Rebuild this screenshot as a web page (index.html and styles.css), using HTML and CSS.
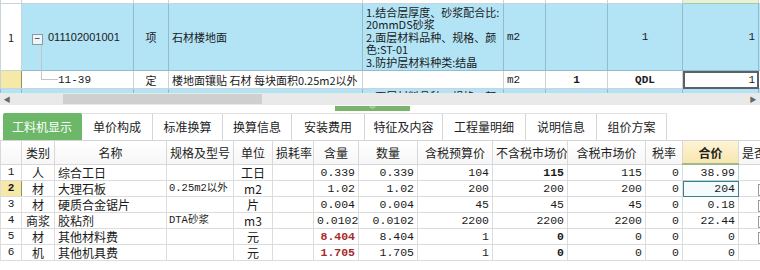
FILE: index.html
```html
<!DOCTYPE html>
<html lang="zh-CN">
<head>
    <meta charset="UTF-8">
    <title>工料机显示</title>
    <link rel="stylesheet" href="styles.css">
</head>
<body>
    <div class="top-pane">
        <div class="top-view">
            <table class="grid grid-top">
                <colgroup>
                    <col style="width:21px"><col style="width:112px"><col style="width:35px"><col style="width:194px">
                    <col style="width:141px"><col style="width:42px"><col style="width:62px"><col style="width:75px">
                    <col style="width:76px"><col style="width:2px">
                </colgroup>
                <tr class="row-cut">
                    <td></td><td></td><td></td><td></td><td></td><td></td><td></td><td></td><td class="cur-col"></td><td></td>
                </tr>
                <tr class="row-blue row-main">
                    <td class="num">1</td>
                    <td class="code"><span class="fold">−</span>011102001001</td>
                    <td class="kind">项</td>
                    <td class="name">石材楼地面</td>
                    <td class="desc">1.结合层厚度、砂浆配合比:
20mmDS砂浆
2.面层材料品种、规格、颜色:ST-01
3.防护层材料种类:结晶</td>
                    <td class="unit">m2</td>
                    <td></td>
                    <td class="mid">1</td>
                    <td class="val">1</td>
                    <td></td>
                </tr>
                <tr class="row-sub">
                    <td class="num num-cur"></td>
                    <td class="code code-sub"><span class="tree"></span>11-39</td>
                    <td class="kind">定</td>
                    <td class="name">楼地面镶贴 石材 每块面积0.25m2以外</td>
                    <td></td>
                    <td class="unit">m2</td>
                    <td class="mid">1</td>
                    <td class="mid">QDL</td>
                    <td class="val val-cur">1</td>
                    <td></td>
                </tr>
                <tr class="row-blue row-next">
                    <td></td><td></td><td></td><td></td>
                    <td class="desc">1.面层材料品种、规格、颜</td>
                    <td></td><td></td><td></td><td></td><td></td>
                </tr>
            </table>
        </div>
        <div class="hscroll">
            <span class="arrow">◀</span>
            <div class="track"><div class="thumb"></div></div>
            <span class="arrow">▶</span>
        </div>
    </div>

    <div class="splitter"><div class="handle">︾</div></div>

    <div class="tabs">
        <div class="tab tab-on" style="width:79px">工料机显示</div>
        <div class="tab" style="width:71px">单价构成</div>
        <div class="tab" style="width:70px">标准换算</div>
        <div class="tab" style="width:69px">换算信息</div>
        <div class="tab" style="width:73px">安装费用</div>
        <div class="tab" style="width:78px">特征及内容</div>
        <div class="tab" style="width:83px">工程量明细</div>
        <div class="tab" style="width:71px">说明信息</div>
        <div class="tab" style="width:70px">组价方案</div>
    </div>

    <table class="grid grid-res">
        <colgroup>
            <col style="width:21px"><col style="width:33px"><col style="width:112px"><col style="width:67px">
            <col style="width:39px"><col style="width:41px"><col style="width:45px"><col style="width:59px">
            <col style="width:75px"><col style="width:75px"><col style="width:78px"><col style="width:37px">
            <col style="width:56px"><col style="width:22px">
        </colgroup>
        <tr class="head">
            <th></th><th>类别</th><th>名称</th><th>规格及型号</th><th>单位</th><th>损耗率</th><th>含量</th>
            <th>数量</th><th>含税预算价</th><th>不含税市场价</th><th>含税市场价</th><th>税率</th>
            <th class="sum-head">合价</th><th class="cut">是否</th>
        </tr>
        <tr>
            <td class="num">1</td><td class="mid">人</td><td>综合工日</td><td></td><td class="mid">工日</td><td></td>
            <td class="n">0.339</td><td class="n">0.339</td><td class="n">104</td><td class="n b">115</td>
            <td class="n">115</td><td class="n">0</td><td class="n sum-top">38.99</td><td></td>
        </tr>
        <tr>
            <td class="num num-cur">2</td><td class="mid">材</td><td>大理石板</td><td class="spec">0.25m2以外</td><td class="mid">m2</td><td></td>
            <td class="n">1.02</td><td class="n">1.02</td><td class="n">200</td><td class="n">200</td>
            <td class="n">200</td><td class="n">0</td><td class="n sum-cur">204</td><td><span class="chk"></span></td>
        </tr>
        <tr>
            <td class="num">3</td><td class="mid">材</td><td>硬质合金锯片</td><td></td><td class="mid">片</td><td></td>
            <td class="n">0.004</td><td class="n">0.004</td><td class="n">45</td><td class="n">45</td>
            <td class="n">45</td><td class="n">0</td><td class="n">0.18</td><td><span class="chk"></span></td>
        </tr>
        <tr>
            <td class="num">4</td><td class="mid">商浆</td><td>胶粘剂</td><td class="spec">DTA砂浆</td><td class="mid">m3</td><td></td>
            <td class="n">0.0102</td><td class="n">0.0102</td><td class="n">2200</td><td class="n">2200</td>
            <td class="n">2200</td><td class="n">0</td><td class="n">22.44</td><td><span class="chk"></span></td>
        </tr>
        <tr>
            <td class="num">5</td><td class="mid">材</td><td>其他材料费</td><td></td><td class="mid">元</td><td></td>
            <td class="n red">8.404</td><td class="n">8.404</td><td class="n">1</td><td class="n b">0</td>
            <td class="n">0</td><td class="n">0</td><td class="n">0</td><td><span class="chk"></span></td>
        </tr>
        <tr>
            <td class="num">6</td><td class="mid">机</td><td>其他机具费</td><td></td><td class="mid">元</td><td></td>
            <td class="n red">1.705</td><td class="n">1.705</td><td class="n">1</td><td class="n b">0</td>
            <td class="n">0</td><td class="n">0</td><td class="n">0</td><td></td>
        </tr>
    </table>
</body>
</html>
```

FILE: styles.css
```css
body {
    margin: 0;
    background: #fff;
    color: #1a1a1a;
    font-family: "Noto Sans CJK SC", sans-serif;
    font-size: 12px;
    width: 760px;
    height: 270px;
    overflow: hidden;
}
.grid {
    border-collapse: collapse;
    table-layout: fixed;
    width: 760px;
}
.grid td, .grid th {
    padding: 0 3px;
    overflow: hidden;
    white-space: nowrap;
}

/* upper grid */
.top-view {
    height: 93px;
    overflow: hidden;
}
.grid-top td {
    border: 1px solid #c9d3d8;
    font-size: 11px;
    line-height: 14px;
}
.grid-top .row-cut td {
    height: 3px;
    padding: 0;
    line-height: 0;
    border-top: none;
}
.grid-top .cur-col {
    background: #e6f3da;
    border-bottom: 1px solid #a9c99a;
}
.row-blue td {
    background: #b2e4f6;
    border-color: #93bccb;
}
.row-blue td.num {
    background: #fff;
    border-color: #c9d3d8;
}
.row-main td {
    height: 64px;
}
.row-sub td {
    height: 17px;
}
.row-next td {
    height: 20px;
    vertical-align: top;
}
.row-next .desc {
    padding-top: 0;
    line-height: 12px;
}
.grid-top .num {
    text-align: center;
    padding: 0;
}
.num-cur {
    background: #f6e9a8;
    border-right: 1px solid #8d9460 !important;
}
.code {
    font-family: "Liberation Sans", sans-serif;
    font-size: 10px;
    padding-left: 10px !important;
}
.fold {
    display: inline-block;
    width: 9px;
    height: 9px;
    line-height: 8px;
    border: 1px solid #8a9aa4;
    background: #eef6f9;
    color: #333;
    font-size: 10px;
    text-align: center;
    margin-right: 5px;
    vertical-align: -1px;
}
.code-sub {
    position: relative;
    padding-left: 36px !important;
    font-family: "Liberation Mono", monospace;
}
.tree {
    position: absolute;
    left: 19px;
    top: -26px;
    width: 16px;
    height: 34px;
    border-left: 1px solid #c4c4c4;
    border-bottom: 1px solid #c4c4c4;
}
.row-sub td.code-sub {
    overflow: visible;
}
.kind {
    text-align: center;
    font-size: 12px;
}
.name {
    font-size: 11.5px;
}
.desc {
    white-space: pre-line !important;
    font-size: 10.5px;
    line-height: 12.5px !important;
    padding: 1px 3px !important;
}
.unit {
    font-family: "Liberation Mono", monospace;
    font-size: 10px;
}
.grid-top .mid {
    text-align: center;
    font-family: "Liberation Mono", monospace;
    font-size: 11px;
}
.grid-top .val {
    text-align: right;
    font-family: "Liberation Mono", monospace;
    font-size: 11px;
}
.row-sub .mid {
    font-weight: bold;
}
.val-cur {
    outline: 2px solid #5b6166;
    outline-offset: -2px;
}

/* horizontal scrollbar */
.hscroll {
    display: flex;
    align-items: center;
    height: 12px;
    background: #e9e9e9;
}
.arrow {
    width: 14px;
    font-size: 7px;
    color: #666;
    text-align: center;
}
.track {
    flex: 1;
    height: 10px;
}
.thumb {
    margin-left: 49px;
    width: 199px;
    height: 10px;
    background: #cfcfcf;
}

/* splitter */
.splitter {
    height: 7px;
    padding-left: 335px;
}
.handle {
    width: 75px;
    height: 5px;
    margin-top: 1px;
    background: #7ab46c;
    color: #e9f3e4;
    font-size: 6px;
    line-height: 5px;
    text-align: center;
}

/* tabs */
.tabs {
    display: flex;
    height: 28px;
    padding-left: 3px;
    border-bottom: 1px solid #d4d4d4;
    box-sizing: border-box;
}
.tab {
    box-sizing: border-box;
    border-right: 1px solid #d6d6d6;
    border-top: 1px solid #e2e2e2;
    text-align: center;
    line-height: 26px;
    font-size: 12px;
    color: #222;
}
.tab-on {
    background: #6cb868;
    color: #fff;
    border-color: #6cb868;
    border-radius: 2px 2px 0 0;
}

/* resource grid */
.grid-res th {
    height: 22px;
    font-weight: normal;
    font-size: 12px;
    color: #222;
    background: linear-gradient(#fff, #f6f6f6);
    border: 1px solid #d8d8d8;
    border-top: none;
}
.grid-res th.sum-head {
    background: linear-gradient(#fdf4d6, #f8e6ae);
    border-bottom: 2px solid #9dba8c;
    font-weight: bold;
}
.grid-res th.cut {
    text-align: left;
    overflow: hidden;
    text-overflow: clip;
}
.grid-res td {
    height: 15px;
    border: 1px solid #dcdcdc;
    line-height: 15px;
    font-size: 12px;
}
.grid-res .num {
    text-align: center;
    padding: 0;
    font-family: "Liberation Mono", monospace;
    font-size: 11px;
}
.grid-res .num-cur {
    font-weight: bold;
    border-right: 1px solid #9a9a6a;
}
.grid-res .mid {
    text-align: center;
}
.spec, .grid-res .n {
    font-family: "Liberation Mono", "Noto Sans CJK SC", monospace;
    font-size: 11.5px;
}
.grid-res td.spec {
    font-size: 10.5px;
    padding: 0 2px;
}
.grid-res .n {
    text-align: right;
}
.b {
    font-weight: bold;
}
.red {
    color: #a52a2a;
    font-weight: bold;
}
.sum-top {
    border: 1px solid #b5d3dc !important;
}
.sum-cur {
    background: #f3fbfd;
    outline: 1px solid #3f7f86;
    outline-offset: -1px;
}
.chk {
    display: inline-block;
    width: 10px;
    height: 10px;
    margin-left: 16px;
    border: 1px solid #9a9a9a;
    vertical-align: -2px;
    background: #fff;
}
```
